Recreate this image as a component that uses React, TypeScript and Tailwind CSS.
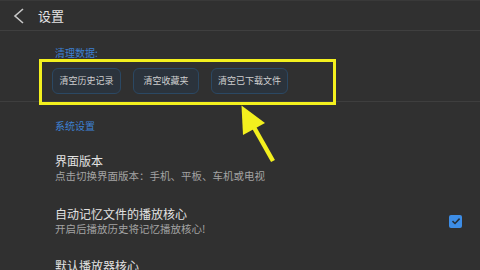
import React from "react";

export default function App() {
  return (
    <div
      className="relative w-[480px] h-[270px] overflow-hidden bg-[#303030] border-t border-[#393939]"
      style={{ fontFamily: '"Noto Sans CJK SC", "Noto Sans", sans-serif' }}
    >
      {/* header */}
      <div className="flex h-[30px] items-center border-b border-[#3f3f3f]">
        <svg width="14" height="18" viewBox="0 0 14 18" className="ml-[12px]">
          <path d="M11 2 L3 9 L11 16" fill="none" stroke="#c8c8c8" strokeWidth="1.6" />
        </svg>
        <span className="ml-[12px] text-[13px] leading-none text-[#e4e4e4]">设置</span>
      </div>

      {/* clear data */}
      <div className="border-b border-[#3e3e3e] pl-[55px] pt-[16px] pb-[7px]">
        <div className="text-[10px] leading-[12px] text-[#3d80d2]">清理数据:</div>
        <div className="mt-[9px] flex gap-[12px] pl-[-3px] -ml-[3px]">
          <button className="h-[26px] w-[69px] rounded-[6px] border border-[#2b4863] bg-[#2b333c] text-[9px] text-[#cfcfcf]">
            清空历史记录
          </button>
          <button className="h-[26px] w-[66px] rounded-[6px] border border-[#2b4863] bg-[#2b333c] text-[9px] text-[#cfcfcf]">
            清空收藏夹
          </button>
          <button className="h-[26px] w-[77px] rounded-[6px] border border-[#2b4863] bg-[#2b333c] text-[9px] text-[#cfcfcf]">
            清空已下载文件
          </button>
        </div>
      </div>

      {/* system settings */}
      <div className="pl-[55px] pr-[18px] pt-[18px]">
        <div className="text-[10px] leading-[12px] text-[#3d80d2]">系统设置</div>

        <div className="mt-[21px]">
          <div className="text-[12px] leading-[16px] text-[#e2e2e2]">界面版本</div>
          <div className="text-[10.5px] leading-[14px] text-[#a3a3a3]">
            点击切换界面版本：手机、平板、车机或电视
          </div>
        </div>

        <div className="mt-[23px] flex items-center justify-between">
          <div>
            <div className="text-[12px] leading-[16px] text-[#e2e2e2]">自动记忆文件的播放核心</div>
            <div className="text-[10.5px] leading-[14px] text-[#a3a3a3]">开启后播放历史将记忆播放核心!</div>
          </div>
          <div className="flex h-[13px] w-[13px] items-center justify-center rounded-[2px] bg-[#3d8de6]">
            <svg width="10" height="10" viewBox="0 0 10 10">
              <path d="M1.5 5.2 L4 7.5 L8.6 2.6" fill="none" stroke="#25303a" strokeWidth="1.6" />
            </svg>
          </div>
        </div>

        <div className="mt-[22px]">
          <div className="text-[12px] leading-[16px] text-[#e2e2e2]">默认播放器核心</div>
        </div>
      </div>

      {/* annotation overlay */}
      <div className="absolute left-[39px] top-[58px] h-[46px] w-[297px] border-[3.5px] border-[#f3f01e]" />
      <svg className="absolute left-0 top-0" width="480" height="270" viewBox="0 0 480 270">
        <line x1="247" y1="114" x2="273" y2="160" stroke="#f3f01e" strokeWidth="4.5" />
        <polygon points="241.5,104.5 243,134 265,122" fill="#f3f01e" />
      </svg>
    </div>
  );
}
